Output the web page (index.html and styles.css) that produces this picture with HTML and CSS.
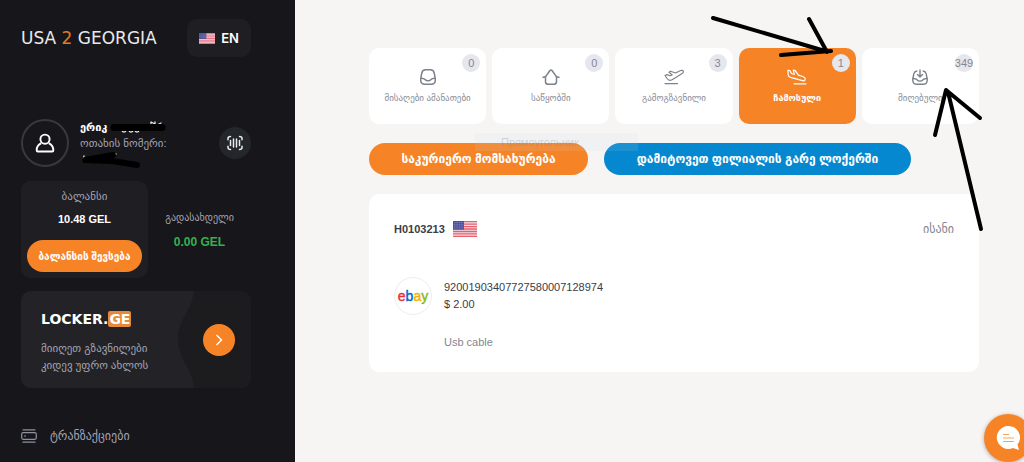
FILE: index.html
```
<!DOCTYPE html>
<html lang="ka">

<head>
    <meta charset="UTF-8">
    <meta name="viewport" content="width=device-width, initial-scale=1.0">
    <title>USA 2 GEORGIA</title>
    <link rel="stylesheet" href="styles.css">
</head>

<body>
    <svg class="defs" aria-hidden="true">
        <symbol id="flag-us" viewBox="0 0 24 16" preserveAspectRatio="none">
            <rect width="24" height="16" fill="#f3dfe4" />
            <path d="M0 .7h24M0 3.1h24M0 5.6h24M0 8h24M0 10.5h24M0 12.9h24M0 15.3h24" stroke="#e5616f" stroke-width="1.3" />
            <rect width="11" height="8.6" fill="#4a4f9c" />
            <path d="M1 1.5h9.5M1 3.3h9.5M1 5.1h9.5M1 6.9h9.5" stroke="#a9acd6" stroke-width=".7" stroke-dasharray=".8 .9" />
        </symbol>
    </svg>

    <div class="layout">
        <aside class="sidebar">
            <div class="top-bar">
                <a class="logo" href="#">USA <span>2</span> GEORGIA</a>
                <button class="lang" type="button">
                    <svg class="flag-small"><use href="#flag-us" /></svg>
                    EN
                </button>
            </div>

            <div class="profile">
                <div class="avatar">
                    <svg width="20" height="20" viewBox="0 0 20 20" fill="none" stroke="#fff" stroke-width="1.9" stroke-linejoin="round">
                        <circle cx="10" cy="6.2" r="4.6" />
                        <path d="M6.2 10.2C3.5 11.6 1.7 14 1.7 17.2c0 .9.3 1.3 1.1 1.3h14.4c.8 0 1.1-.4 1.1-1.3 0-3.2-1.8-5.6-4.5-7" />
                    </svg>
                </div>
                <div class="profile-text">
                    <div class="name">ერიკ</div>
                    <div class="room">ოთახის ნომერი:</div>
                    <svg class="marker" width="92" height="52" viewBox="0 0 92 52" fill="none" stroke="#000" stroke-linecap="round" stroke-linejoin="round">
                        <path d="M42 11.500c0 2 4 2 4 0M49 11.500c0 2 4 2 4 0M55 11.500c0 2 4 2 4 0M71 6v-3l4 2v-2M77 6l4-2" stroke="#e9e9ec" stroke-width="1.3" />
                        <path d="M34 8.500h48" stroke-width="7" />
                        <path d="M4 37l-1 5M33 36l3-1" stroke="#c9c9cf" stroke-width="1.500" />
                        <path d="M5 41l28-5M5 41l27 1 25 4" stroke-width="6" />
                    </svg>
                </div>
                <button class="scan" type="button" aria-label="Barcode">
                    <svg width="16" height="16" viewBox="0 0 16 16" fill="none" stroke="#e9edf0" stroke-width="1.5" stroke-linecap="round">
                        <path d="M1 4.700V3.500C1 2.200 1.800 1.500 3.500 1.500M12.500 1.500C14.200 1.500 15 2.200 15 3.500v1.200M15 11.300v1.200c0 1.300-.8 2-2.500 2M3.500 14.500C1.800 14.500 1 13.800 1 12.500v-1.200" />
                        <path d="M3.500 5.500v5M6.500 4v8M9.500 4v8M12.500 5.500v5" />
                    </svg>
                </button>
            </div>

            <div class="money">
                <div class="balance">
                    <div class="balance-label">ბალანსი</div>
                    <div class="balance-value">10.48 GEL</div>
                    <button class="fill" type="button">ბალანსის შევსება</button>
                </div>
                <div class="debt">
                    <div class="debt-label">გადასახდელი</div>
                    <div class="debt-value">0.00 GEL</div>
                </div>
            </div>

            <a class="locker" href="#">
                <svg class="locker-wave" width="74" height="97" viewBox="0 0 74 97" preserveAspectRatio="none">
                    <path d="M17 0C14 22 1 28 1 48s15 30 16 49h57V0z" fill="#1c1c1e" />
                </svg>
                <div class="locker-text">
                    <div class="locker-logo">LOCKER.<span>GE</span></div>
                    <p>მიიღეთ გზავნილები<br>კიდევ უფრო ახლოს</p>
                </div>
                <div class="locker-arrow">
                    <svg width="8" height="12" viewBox="0 0 8 12" fill="none" stroke="#fff" stroke-width="1.4">
                        <path d="M1.500 1l5 5-5 5" />
                    </svg>
                </div>
            </a>

            <nav class="menu">
                <a href="#">
                    <svg width="16" height="14" viewBox="0 0 16 14" fill="none" stroke="#8e91a0" stroke-width="1.2" stroke-linecap="round">
                        <path d="M2 .8h12M2 13.200h12M3.500 7h1" />
                        <rect x=".7" y="3.7" width="14.6" height="6.6" rx="1.5" />
                    </svg>
                    ტრანზაქციები
                </a>
            </nav>
        </aside>

        <main class="content">
            <nav class="tabs">
                <a class="tab" href="#">
                    <span class="count">0</span>
                    <svg width="16" height="16" viewBox="0 0 16 16" fill="none" stroke="#7d818a" stroke-width="1.5" stroke-linejoin="round">
                        <path d="M5.500.8h5c2.300 0 3.300 1 3.700 3.200l1 5.200c.6 4-.7 6-3.700 6h-7c-3 0-4.300-2-3.700-6l1-5.200C2.200 1.800 3.200.8 5.500.8z" />
                        <path d="M1 9.200c3 0 3.300.2 4.300 1.500 1.200 1.500 4.200 1.500 5.400 0 1-1.300 1.300-1.500 4.300-1.500" />
                    </svg>
                    <span class="label">მისაღები ამანათები</span>
                </a>
                <a class="tab" href="#">
                    <span class="count">0</span>
                    <svg width="18" height="16" viewBox="0 0 18 16" fill="none" stroke="#7d818a" stroke-width="1.5" stroke-linecap="round" stroke-linejoin="round">
                        <path d="M1 8.300c1.500.2 2-.2 3-1.200l3.800-5.300c.8-1 1.600-1 2.400 0L14 7.100c1 1 1.500 1.400 3 1.200" />
                        <path d="M3.500 8v4.500c0 1.800 1 2.800 2.800 2.800h5.400c1.800 0 2.800-1 2.800-2.800V8" />
                    </svg>
                    <span class="label">საწყობში</span>
                </a>
                <a class="tab" href="#">
                    <span class="count">3</span>
                    <svg width="20" height="16" viewBox="0 0 20 16" fill="none" stroke="#7d818a" stroke-width="1.2" stroke-linecap="round" stroke-linejoin="round">
                        <path d="M1 6.500l2-.9 3 1.200 2.200-.9L5 3.300l1.600-1.100 4.900 1.800 5.200-2.500c1.200-.5 2.300-.1 2.600.8.2.8-.3 1.600-1.300 2.300l-4.500 2.900L8 10.800c-1.800.8-3.300.7-4.500-.8z" />
                        <path d="M1 14.600h12.500" />
                    </svg>
                    <span class="label">გამოგზავნილი</span>
                </a>
                <a class="tab active" href="#">
                    <span class="count">1</span>
                    <svg width="20" height="16" viewBox="0 0 20 16" fill="none" stroke="#fff" stroke-width="1.2" stroke-linecap="round" stroke-linejoin="round">
                        <path d="M1 1.200l2 .6 1.500 2.700 2.800.8L6.300 1l2 .6 3 4.500 4.500 1.400c1.600.6 2.500 1.700 2.400 2.800-.1 1.300-1.200 1.800-2.700 1.400L3.500 8.300C2 7.800 1.200 6.900 1.100 5.500z" />
                        <path d="M7 14.800h12" />
                    </svg>
                    <span class="label">ჩამოსული</span>
                    <svg class="arrow arrow-down" width="124" height="42" viewBox="0 0 124 42" aria-hidden="true">
                        <path d="M4 4L116 37M100 5l18 33M72 41L122 37" />
                    </svg>
                </a>
                <a class="tab" href="#">
                    <span class="count">349</span>
                    <svg width="16" height="16" viewBox="0 0 16 16" fill="none" stroke="#7d818a" stroke-width="1.4" stroke-linecap="round" stroke-linejoin="round">
                        <path d="M4.800 2C3 2.300 2.200 3.200 1.900 4.600L.9 9.500c-.5 3.800.8 5.700 3.600 5.700h7c2.800 0 4.100-1.900 3.600-5.700l-1-4.900C13.800 3.200 13 2.300 11.200 2" />
                        <path d="M1 9.500c3 0 3.300.2 4.300 1.500 1.200 1.500 4.200 1.500 5.400 0 1-1.300 1.300-1.500 4.300-1.500M8 1v6.500M5.500 5.500L8 8l2.500-2.500" />
                    </svg>
                    <span class="label">მიღებული</span>
                    <svg class="arrow arrow-up" width="56" height="146" viewBox="0 0 56 146" aria-hidden="true">
                        <path d="M50 142L17 5M15 3L4 48M15 3l34 28" />
                    </svg>
                </a>
            </nav>

            <div class="actions">
                <button class="courier" type="button">საკურიერო მომსახურება</button>
                <button class="outside" type="button">დამიტოვეთ ფილიალის გარე ლოქერში</button>
                <div class="hint">Прямоугольник</div>
            </div>

            <section class="parcel">
                <header class="parcel-head">
                    <h2>H0103213</h2>
                    <svg class="flag"><use href="#flag-us" /></svg>
                    <span class="branch">ისანი</span>
                </header>
                <div class="parcel-body">
                    <div class="shop"><span class="e">e</span><span class="b">b</span><span class="a">a</span><span class="y">y</span></div>
                    <div class="details">
                        <div>92001903407727580007128974</div>
                        <div>$ 2.00</div>
                        <p>Usb cable</p>
                    </div>
                </div>
            </section>
        </main>
    </div>

    <button class="chat" type="button" aria-label="Chat">
        <svg width="24" height="26" viewBox="0 0 24 26">
            <path d="M12 1a11.500 11.500 0 1 0 5 22l6 2-1.500-5.500A11.500 11.500 0 0 0 12 1z" fill="#fff" />
            <path d="M7 9.500h6M7 13h11M7 16.500h11" stroke="#f4a45e" stroke-width="1.2" />
        </svg>
    </button>
</body>

</html>
```
FILE: styles.css
```
* {
    box-sizing: border-box;
}

body {
    margin: 0;
    font-family: "Liberation Sans", "DejaVu Sans", sans-serif;
    font-size: 12px;
    line-height: 16px;
    background: #f6f5f4;
    color: #3b3c48;
    overflow-x: hidden;
}

a {
    color: inherit;
    text-decoration: none;
}

button {
    border: 0;
    padding: 0;
    font-family: inherit;
    cursor: pointer;
}

.defs {
    position: absolute;
    width: 0;
    height: 0;
}

.layout {
    display: flex;
    min-height: 100vh;
}

/* sidebar */
.sidebar {
    flex: 0 0 295px;
    padding: 19px 44px 16px 21px;
    background: #17161b;
    color: #a3a4b2;
}

.top-bar {
    display: flex;
    align-items: center;
    justify-content: space-between;
    margin-bottom: 62px;
}

.logo {
    font-family: "DejaVu Sans", sans-serif;
    font-size: 17px;
    color: #e9e9ec;
    white-space: nowrap;
}

.logo span {
    color: #e07b22;
}

.lang {
    display: flex;
    align-items: center;
    justify-content: center;
    gap: 6px;
    width: 64px;
    height: 38px;
    border-radius: 10px;
    background: #1f1e23;
    color: #fff;
    font-family: Inter, sans-serif;
    font-size: 13px;
    font-weight: 600;
}

.flag-small {
    width: 16px;
    height: 11px;
}

.profile {
    display: flex;
    align-items: center;
    margin-bottom: 14px;
}

.avatar {
    display: flex;
    align-items: center;
    justify-content: center;
    width: 48px;
    height: 48px;
    border: 2px solid #38383f;
    border-radius: 50%;
}

.profile-text {
    position: relative;
    flex: 1;
    height: 48px;
    margin-left: 11px;
    font-size: 11px;
}

.name {
    font-weight: bold;
    color: #fff;
}

.marker {
    position: absolute;
    top: 0;
    left: 0;
}

.scan {
    display: flex;
    align-items: center;
    justify-content: center;
    width: 32px;
    height: 32px;
    border-radius: 50%;
    background: #23262a;
}

.money {
    display: flex;
    align-items: center;
    margin-bottom: 13px;
}

.balance {
    width: 127px;
    padding: 7px 6px 6px;
    border-radius: 10px;
    background: #1f1e23;
    text-align: center;
}

.balance-label {
    font-size: 11px;
}

.balance-value {
    margin: 7px 0 13px;
    font-size: 11px;
    font-weight: bold;
    color: #fff;
}

.fill {
    width: 100%;
    height: 32px;
    border-radius: 16px;
    background: #f68426;
    color: #fff;
    font-size: 10px;
    font-weight: bold;
    white-space: nowrap;
}

.debt {
    flex: 1;
    text-align: center;
}

.debt-label {
    margin-bottom: 8px;
    font-size: 10px;
}

.debt-value {
    font-size: 12px;
    font-weight: bold;
    color: #33b14f;
}

.locker {
    position: relative;
    display: flex;
    align-items: center;
    justify-content: space-between;
    height: 97px;
    padding: 0 16px 0 20px;
    border-radius: 10px;
    background: #232327;
    overflow: hidden;
}

.locker-wave {
    position: absolute;
    top: 0;
    right: 0;
}

.locker-text {
    padding-top: 6px;
}

.locker-text p {
    margin: 14px 0 0;
    font-size: 11px;
    line-height: 17px;
    white-space: nowrap;
}

.locker-logo {
    font-family: "DejaVu Sans", sans-serif;
    font-size: 14px;
    font-weight: bold;
    line-height: 14px;
    color: #fff;
}

.locker-logo span {
    padding: 0 1px;
    border-radius: 2px;
    background: #e58a3a;
}

.locker-arrow {
    position: relative;
    display: flex;
    align-items: center;
    justify-content: center;
    width: 32px;
    height: 32px;
    border-radius: 50%;
    background: #f68426;
}

.menu {
    margin-top: 40px;
}

.menu a {
    display: flex;
    align-items: center;
    gap: 13px;
    font-size: 12px;
}

/* content */
.content {
    flex: 1;
    min-width: 0;
    padding: 48px 45px 40px 74px;
}

.tabs {
    display: grid;
    grid-template-columns: repeat(5, 1fr);
    gap: 6px;
}

.tab {
    position: relative;
    display: flex;
    flex-direction: column;
    align-items: center;
    gap: 6px;
    height: 76px;
    padding-top: 21px;
    border-radius: 10px;
    background: #fff;
    color: #8a8c96;
}

.tab.active {
    background: #f68426;
    color: #fff;
}

.label {
    font-size: 9px;
    line-height: 14px;
    white-space: nowrap;
}

.active .label {
    font-weight: bold;
}

.count {
    position: absolute;
    top: 6px;
    right: 6px;
    display: flex;
    align-items: center;
    justify-content: center;
    width: 18px;
    height: 18px;
    border-radius: 50%;
    background: #e6e6ee;
    color: #85868f;
    font-size: 11px;
}

.arrow {
    position: absolute;
    z-index: 1;
    overflow: visible;
    fill: none;
    stroke: #000;
    stroke-width: 4;
    stroke-linecap: round;
    pointer-events: none;
}

.arrow-down {
    top: -34px;
    right: 23px;
}

.arrow-up {
    top: 39px;
    right: -8px;
}

.actions {
    position: relative;
    display: flex;
    gap: 16px;
    margin: 19px 0;
}

.actions button {
    height: 32px;
    border-radius: 16px;
    color: #fff;
    font-size: 12px;
    font-weight: bold;
    white-space: nowrap;
}

.actions .courier {
    width: 219px;
    background: #f68426;
}

.actions .outside {
    width: 307px;
    background: #0588cf;
}

.hint {
    position: absolute;
    top: -10px;
    left: 106px;
    width: 163px;
    height: 18px;
    padding-left: 26px;
    background: rgba(190, 215, 240, 0.12);
    color: rgba(110, 110, 120, 0.25);
    font-size: 11px;
    line-height: 18px;
}

.parcel {
    padding: 25px 25px 21px;
    border-radius: 10px;
    background: #fff;
}

.parcel-head {
    display: flex;
    align-items: center;
    height: 20px;
}

.parcel-head h2 {
    margin: 0;
    font-size: 11px;
}

.flag {
    width: 24px;
    height: 16px;
    margin-left: 8px;
}

.branch {
    margin-left: auto;
    color: #85868f;
    font-size: 12px;
}

.parcel-body {
    display: flex;
    gap: 12px;
    margin-top: 38px;
}

.shop {
    display: flex;
    align-items: center;
    justify-content: center;
    width: 38px;
    height: 38px;
    border: 1px solid #ededf0;
    border-radius: 50%;
    font-size: 14px;
    -webkit-text-stroke: 0.4px;
}

.e {
    color: #e53238;
}

.b {
    color: #0064d2;
}

.a {
    color: #f5af02;
}

.y {
    color: #86b817;
}

.details {
    padding-top: 2px;
    font-size: 11px;
    line-height: 17px;
}

.details p {
    margin: 21px 0 0;
    color: #85868f;
}

.chat {
    position: fixed;
    right: -8px;
    bottom: 0;
    display: flex;
    align-items: center;
    justify-content: center;
    width: 48px;
    height: 48px;
    border-radius: 50%;
    background: #f68426;
    box-shadow: 0 1px 4px rgba(0, 0, 0, 0.3);
}
```
